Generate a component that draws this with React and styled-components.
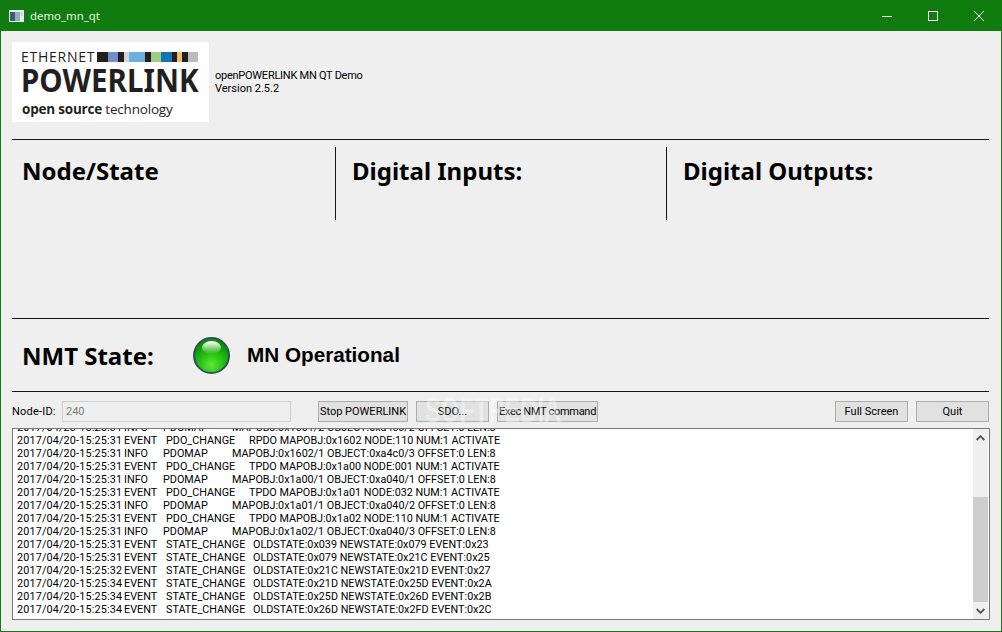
import React from "react";
import styled, { createGlobalStyle } from "styled-components";

const Global = createGlobalStyle`
  html, body { margin: 0; padding: 0; background: #efefef; overflow: hidden; }
  body { font-family: "Roboto", "Noto Sans", sans-serif; }
`;

const Window = styled.div`
  position: relative;
  width: 1002px; height: 632px; box-sizing: border-box;
  display: flex; flex-direction: column;
  background: #efefef;
  border: 1px solid #107c10; border-top: none;
  overflow: hidden;
`;
const TitleBar = styled.header`
  height: 31px; flex: none; margin: 0 -1px; background: #107c10;
  display: flex; align-items: center; color: #e6f5e6;
  font: 11.4px "Noto Sans", sans-serif; padding-left: 9px;
`;
const TitleText = styled.span` margin-left: 6px; flex: 1; `;
const WinControl = styled.span`
  width: 46px; height: 31px; display: flex; align-items: center; justify-content: center;
`;
const Content = styled.main`
  flex: 1; display: flex; flex-direction: column; padding: 11px 12px 0 11px;
`;
const Header = styled.section`
  display: flex; align-items: center; height: 80px; flex: none;
`;
const Logo = styled.div`
  width: 197px; height: 80px; flex: none; box-sizing: border-box; background: #fff;
  padding: 9px 11px 0 10px; color: #231f20; font-family: "Open Sans", sans-serif;
`;
const LogoTop = styled.div` display: flex; align-items: center; height: 12px; `;
const LogoEthernet = styled.span`
  font-size: 14px; letter-spacing: 0.75px; line-height: 12px; width: 75px; flex: none; margin-left: -1px; margin-right: 1px;
`;
const LogoBars = styled.div` display: flex; height: 10px; flex: 1; `;
const LogoBar = styled.i` display: block; height: 100%; flex: ${(p) => p.$w} 0 0; background: ${(p) => p.$c}; `;
const LogoMain = styled.div`
  font-size: 33px; font-weight: 700; line-height: 31px; height: 30px; margin: 1px 0 0 -1px;
  transform: scaleX(0.895); transform-origin: left; white-space: nowrap;
  font-family: "Noto Sans", sans-serif;
`;
const LogoSub = styled.div`
  font-size: 13.5px; line-height: 16px; margin-top: 7px; white-space: nowrap; letter-spacing: -0.2px;
  b { font-weight: 700; }
`;
const About = styled.div`
  margin: 0 0 0 6px; font-size: 11px; line-height: 13px; color: #000;
`;
const AboutTitle = styled.span` letter-spacing: -0.25px; `;
const Rule = styled.hr`
  border: none; height: 1px; background: #141414; margin: ${(p) => p.$m || 0}; flex: none;
`;
const Columns = styled.section`
  display: grid; grid-template-columns: 324px 331px 1fr; height: 73px; margin-top: 7px; flex: none;
`;
const Column = styled.div`
  padding-left: ${(p) => p.$pad}px;
  border-right: ${(p) => (p.$line ? "1px solid #141414" : "none")};
`;
const Heading = styled.h2`
  margin: 9px 0 0; font: bold 24px/30px "Noto Sans", sans-serif; color: #000;
`;
const Spacer = styled.div` height: 98px; flex: none; `;
const NmtRow = styled.section`
  height: 72px; flex: none; display: flex; align-items: center; padding-left: 10px;
`;
const NmtLabel = styled.h2`
  margin: 2px 0 0; width: 171px; font: bold 24px/30px "Noto Sans", sans-serif; color: #000;
`;
const Led = styled.div`
  width: 37px; height: 37px; border-radius: 50%; flex: none; box-sizing: border-box; position: relative;
  margin: 1px -1px 0 0;
  border: 2px solid #2f5257;
  background: radial-gradient(circle at 50% 78%, #5fe63c 0%, #2cc414 35%, #0e9d06 65%, #067a02 100%);
`;
const LedShine = styled.i`
  position: absolute; left: 7px; top: 2px; width: 19px; height: 13px; border-radius: 50%;
  background: linear-gradient(#ffffff 5%, rgba(190, 235, 175, 0.8) 45%, rgba(40, 170, 20, 0.15) 100%);
`;
const NmtValue = styled.span`
  margin-left: 18px; font: bold 20.7px/24px "Liberation Sans", sans-serif; color: #000;
`;
const Toolbar = styled.section`
  position: relative;
  display: flex; align-items: center; height: 22px; margin-top: 8px; flex: none; font-size: 11px;
`;
const FieldLabel = styled.label` width: 50px; flex: none; color: #000; letter-spacing: 0.2px; `;
const Field = styled.input`
  width: 229px; height: 21px; box-sizing: border-box; background: #efefef; color: #7d7d7d;
  border: 1px solid #cfcfcf; font: 11px "Roboto", sans-serif; padding: 0 3px;
`;
const Btn = styled.button`
  width: ${(p) => p.$w}px; height: 21px; flex: none; margin-left: ${(p) => p.$ml}px; padding: 0;
  background: #e1e1e1; border: 1px solid #adadad; color: #000;
  font: 11px "Roboto", sans-serif; white-space: nowrap;
  letter-spacing: ${(p) => p.$ls || 0}px;
`;
const Watermark = styled.span`
  position: absolute; left: 413px; top: -7px; font: bold 35px/34px "Liberation Sans", sans-serif;
  letter-spacing: 0; color: rgba(255, 255, 255, 0.38); pointer-events: none;
  transform: scaleX(0.68); transform-origin: left;
`;
const LogBox = styled.section`
  height: 192px; margin: 6px -1px 0 0; flex: none; box-sizing: border-box;
  border: 1px solid #777; background: #fff; display: flex; overflow: hidden;
`;
const LogLines = styled.div`
  flex: 1; min-width: 0; padding: 0 0 0 4px; margin-top: -8px;
  font-size: 10.8px; line-height: 13px; color: #000;
`;
const LogLine = styled.div` display: flex; height: 13px; white-space: pre; `;
const Cell = styled.span` width: ${(p) => p.$w}px; flex: none; `;
const DateCell = styled.span` width: 107px; flex: none; letter-spacing: 0.16px; `;
const Scrollbar = styled.aside`
  width: 15px; flex: none; background: #efefef; display: flex; flex-direction: column;
  margin-right: 1px;
`;
const ScrollArrow = styled.div`
  height: 17px; flex: none; display: flex; align-items: center; justify-content: center;
`;
const ScrollTrack = styled.div` flex: 1; display: flex; flex-direction: column; justify-content: flex-end; `;
const ScrollThumb = styled.div` height: 105px; background: #cdcdcd; `;

const PDO = (time, dir, obj, node) => ({ time, lvl: "EVENT", kind: "PDO_CHANGE", msg: `${dir} MAPOBJ:${obj} NODE:${node} NUM:1 ACTIVATE` });
const MAP = (time, obj, tgt) => ({ time, lvl: "INFO", kind: "PDOMAP", msg: `MAPOBJ:${obj} OBJECT:${tgt} OFFSET:0 LEN:8` });
const ST = (time, a, b, e) => ({ time, lvl: "EVENT", kind: "STATE_CHANGE", msg: `OLDSTATE:${a} NEWSTATE:${b} EVENT:${e}` });

const rows = [
  MAP("31", "0x1601/2", "0xa4c0/2"),
  PDO("31", "RPDO", "0x1602", "110"),
  MAP("31", "0x1602/1", "0xa4c0/3"),
  PDO("31", "TPDO", "0x1a00", "001"),
  MAP("31", "0x1a00/1", "0xa040/1"),
  PDO("31", "TPDO", "0x1a01", "032"),
  MAP("31", "0x1a01/1", "0xa040/2"),
  PDO("31", "TPDO", "0x1a02", "110"),
  MAP("31", "0x1a02/1", "0xa040/3"),
  ST("31", "0x039", "0x079", "0x23"),
  ST("31", "0x079", "0x21C", "0x25"),
  ST("32", "0x21C", "0x21D", "0x27"),
  ST("34", "0x21D", "0x25D", "0x2A"),
  ST("34", "0x25D", "0x26D", "0x2B"),
  ST("34", "0x26D", "0x2FD", "0x2C"),
];

const bars = [
  [10.7, "#231f20"], [10.3, "#6f8fc9"], [5.7, "#231f20"], [5, "#d2d4d4"], [15.7, "#6cb0dd"], [5.3, "#231f20"],
  [10.3, "#9ccf7f"], [10.7, "#0f76b0"], [5, "#231f20"], [5.3, "#f0bd6b"], [5.3, "#231f20"], [10, "#bcbcbc"],
];

const kindWidth = { STATE_CHANGE: 87, PDO_CHANGE: 83, PDOMAP: 69 };

export default function App() {
  return (
    <Window>
      <Global />
      <TitleBar>
        <svg width="15" height="12" viewBox="0 0 15 12">
          <rect width="15" height="12" fill="#e8eef0" />
          <rect x="1" y="2" width="5" height="9" fill="#3b5f6b" />
          <rect x="6" y="2" width="5" height="9" fill="#8fb0bb" />
          <rect x="11" y="2" width="3" height="4" fill="#c9d6da" />
        </svg>
        <TitleText>demo_mn_qt</TitleText>
        <WinControl>
          <svg width="10" height="10" viewBox="0 0 10 10"><path d="M0 5.5h10" stroke="#fff" fill="none" /></svg>
        </WinControl>
        <WinControl>
          <svg width="10" height="10" viewBox="0 0 10 10"><rect x="0.5" y="0.5" width="9" height="9" stroke="#fff" fill="none" /></svg>
        </WinControl>
        <WinControl>
          <svg width="10" height="10" viewBox="0 0 10 10"><path d="M0 0l10 10M10 0L0 10" stroke="#fff" fill="none" /></svg>
        </WinControl>
      </TitleBar>
      <Content>
        <Header>
          <Logo>
            <LogoTop>
              <LogoEthernet>ETHERNET</LogoEthernet>
              <LogoBars>
                {bars.map(([w, c], i) => <LogoBar key={i} $w={w} $c={c} />)}
              </LogoBars>
            </LogoTop>
            <LogoMain>POWERLINK</LogoMain>
            <LogoSub><b>open source</b> technology</LogoSub>
          </Logo>
          <About><AboutTitle>openPOWERLINK MN QT Demo</AboutTitle><br />Version 2.5.2</About>
        </Header>
        <Rule $m="17px 0 0" />
        <Columns>
          <Column $pad={10} $line><Heading>Node/State</Heading></Column>
          <Column $pad={16} $line><Heading>Digital Inputs:</Heading></Column>
          <Column $pad={16}><Heading>Digital Outputs:</Heading></Column>
        </Columns>
        <Spacer />
        <Rule />
        <NmtRow>
          <NmtLabel>NMT State:</NmtLabel>
          <Led><LedShine /></Led>
          <NmtValue>MN Operational</NmtValue>
        </NmtRow>
        <Rule />
        <Toolbar>
          <FieldLabel>Node-ID:</FieldLabel>
          <Field value="240" disabled readOnly />
          <Btn $w={90} $ml={27}>Stop POWERLINK</Btn>
          <Btn $w={73} $ml={8}>SDO...</Btn>
          <Btn $w={101} $ml={8} $ls={-0.3}>Exec NMT command</Btn>
          <Btn $w={73} $ml={237}>Full Screen</Btn>
          <Btn $w={73} $ml={8}>Quit</Btn>
          <Watermark>SOFTPEDIA</Watermark>
        </Toolbar>
        <LogBox>
          <LogLines>
            {rows.map((r, i) => (
              <LogLine key={i}>
                <DateCell>{`2017/04/20-15:25:${r.time}`}</DateCell>
                <Cell $w={r.lvl === "EVENT" ? 42 : 39}>{r.lvl}</Cell>
                <Cell $w={kindWidth[r.kind]}>{r.kind}</Cell>
                <span>{r.msg}</span>
              </LogLine>
            ))}
          </LogLines>
          <Scrollbar>
            <ScrollArrow>
              <svg width="9" height="6" viewBox="0 0 9 6"><path d="M0.7 5L4.5 1.2 8.3 5" stroke="#505050" strokeWidth="1.8" fill="none" /></svg>
            </ScrollArrow>
            <ScrollTrack><ScrollThumb /></ScrollTrack>
            <ScrollArrow>
              <svg width="9" height="6" viewBox="0 0 9 6"><path d="M0.7 1L4.5 4.8 8.3 1" stroke="#505050" strokeWidth="1.8" fill="none" /></svg>
            </ScrollArrow>
          </Scrollbar>
        </LogBox>
      </Content>
    </Window>
  );
}
